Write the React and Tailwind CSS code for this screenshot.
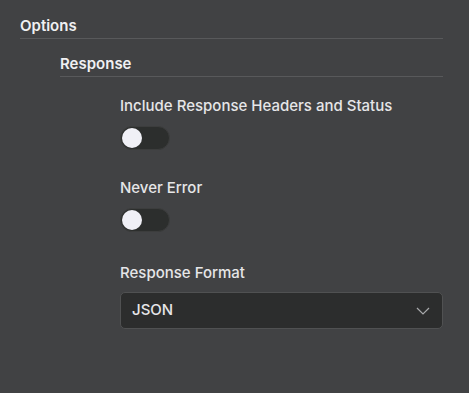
import { useState } from "react";

function Toggle({ on, onChange }) {
  return (
    <button
      onClick={() => onChange(!on)}
      className="relative flex h-[24px] w-[50px] items-center rounded-full border border-[#3c3d3d] bg-[#2c2e2d] px-[1px]"
    >
      <span
        className={`block h-[20px] w-[20px] rounded-full bg-[#f0f0f6] transition-transform ${
          on ? "translate-x-[26px]" : "translate-x-0"
        }`}
      />
    </button>
  );
}

export default function App() {
  const [headers, setHeaders] = useState(false);
  const [neverError, setNeverError] = useState(false);

  return (
    <div
      className="min-h-[393px] w-full bg-[#414244] pr-[26px] pl-[20px] pt-[16px] text-[15px] text-[#e6e6e8]"
      style={{ fontFamily: "Inter, 'Noto Sans', sans-serif" }}
    >
      {/* Options */}
      <div className="border-b border-[#58595b] pb-[2px] font-semibold leading-[20px] text-[#f0f0f2]">
        Options
      </div>

      <div className="pl-[40px]">
        {/* Response */}
        <div className="mt-[15px] border-b border-[#58595b] pb-[2px] font-semibold leading-[20px] text-[#f0f0f2]">
          Response
        </div>

        <div className="flex flex-col pl-[60px] pt-[19px]">
          <label className="font-medium leading-[20px]">Include Response Headers and Status</label>
          <div className="mt-[10px]">
            <Toggle on={headers} onChange={setHeaders} />
          </div>

          <label className="mt-[28px] font-medium leading-[20px]">Never Error</label>
          <div className="mt-[10px]">
            <Toggle on={neverError} onChange={setNeverError} />
          </div>

          <label className="mt-[31px] font-medium leading-[20px]">Response Format</label>
          <button className="mt-[9px] flex h-[37px] w-full items-center justify-between rounded-[5px] border border-[#505152] bg-[#2c2d2d] pl-[11px] pr-[12px] text-left font-medium">
            <span>JSON</span>
            <svg width="14" height="8" viewBox="0 0 14 8" fill="none">
              <polyline points="1,1 7,7 13,1" stroke="#a8a9ab" strokeWidth="1.2" />
            </svg>
          </button>
        </div>
      </div>
    </div>
  );
}
